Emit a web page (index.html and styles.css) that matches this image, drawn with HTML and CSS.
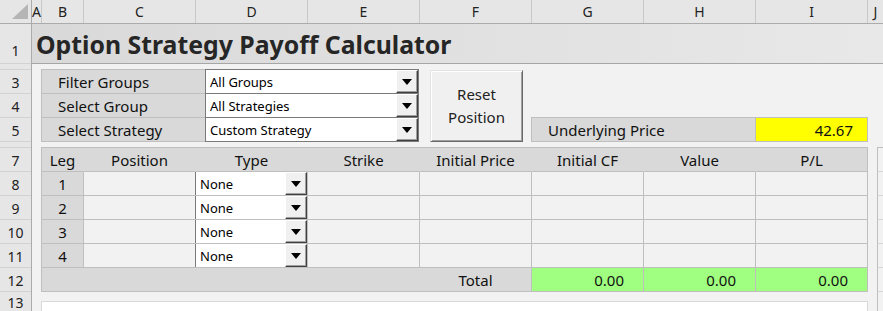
FILE: index.html
```html
<!DOCTYPE html>
<html>
<head>
<meta charset="utf-8">
<title>Option Strategy Payoff Calculator</title>
<link rel="stylesheet" href="styles.css">
</head>
<body>
<div class="app">
  <div class="corner"><svg class="tri" width="16" height="15" viewBox="0 0 16 15"><polygon points="16,0 16,15 0,15" fill="#b5b5b5"/></svg></div>
  <div class="colheads">
    <div class="ch ca">A</div>
    <div class="ch cb">B</div>
    <div class="ch cw">C</div>
    <div class="ch cw">D</div>
    <div class="ch cw">E</div>
    <div class="ch cw">F</div>
    <div class="ch cw">G</div>
    <div class="ch cw">H</div>
    <div class="ch cw">I</div>
    <div class="ch cj">J</div>
  </div>
  <div class="rowheads">
    <div class="rh r1">1</div>
    <div class="rh thin"></div>
    <div class="rh">3</div>
    <div class="rh">4</div>
    <div class="rh">5</div>
    <div class="rh thin"></div>
    <div class="rh">7</div>
    <div class="rh">8</div>
    <div class="rh">9</div>
    <div class="rh">10</div>
    <div class="rh">11</div>
    <div class="rh">12</div>
    <div class="rh r13">13</div>
  </div>
  <div class="content">
    <div class="title">Option Strategy Payoff Calculator</div>
    <div class="controls">
      <div class="filters">
        <div class="flabel first">Filter Groups</div>
        <div class="combo first"><span class="txt">All Groups</span><span class="drop"><span class="arrow"></span></span></div>
        <div class="flabel">Select Group</div>
        <div class="combo"><span class="txt">All Strategies</span><span class="drop"><span class="arrow"></span></span></div>
        <div class="flabel">Select Strategy</div>
        <div class="combo"><span class="txt">Custom Strategy</span><span class="drop"><span class="arrow"></span></span></div>
      </div>
      <button class="reset">Reset<br>Position</button>
      <div class="underlying">
        <div class="ulabel">Underlying Price</div>
        <div class="uval">42.67</div>
      </div>
    </div>
    <div class="lower">
      <div class="leftcol">
        <div class="legs">
          <div class="hd">Leg</div>
          <div class="hd">Position</div>
          <div class="hd">Type</div>
          <div class="hd">Strike</div>
          <div class="hd">Initial Price</div>
          <div class="hd">Initial CF</div>
          <div class="hd">Value</div>
          <div class="hd last">P/L</div>

          <div class="leg">1</div>
          <div class="blank"></div>
          <div class="type"><div class="tcombo"><span class="txt">None</span><span class="drop"><span class="arrow"></span></span></div></div>
          <div class="blank"></div><div class="blank"></div><div class="blank"></div><div class="blank"></div><div class="blank"></div>

          <div class="leg">2</div>
          <div class="blank"></div>
          <div class="type"><div class="tcombo"><span class="txt">None</span><span class="drop"><span class="arrow"></span></span></div></div>
          <div class="blank"></div><div class="blank"></div><div class="blank"></div><div class="blank"></div><div class="blank"></div>

          <div class="leg">3</div>
          <div class="blank"></div>
          <div class="type"><div class="tcombo"><span class="txt">None</span><span class="drop"><span class="arrow"></span></span></div></div>
          <div class="blank"></div><div class="blank"></div><div class="blank"></div><div class="blank"></div><div class="blank"></div>

          <div class="leg">4</div>
          <div class="blank"></div>
          <div class="type"><div class="tcombo"><span class="txt">None</span><span class="drop"><span class="arrow"></span></span></div></div>
          <div class="blank"></div><div class="blank"></div><div class="blank"></div><div class="blank"></div><div class="blank"></div>

          <div class="total"><span>Total</span></div>
          <div class="green">0.00</div>
          <div class="green">0.00</div>
          <div class="green">0.00</div>
        </div>
        <div class="row13"></div>
      </div>
      <div class="jstub"></div>
    </div>
  </div>
</div>
</body>
</html>
```
FILE: styles.css
```css
* { box-sizing: border-box; margin: 0; padding: 0; }
html, body { width: 883px; height: 311px; overflow: hidden; background: #f2f2f2; }
body { font-family: "Noto Sans", "Open Sans", sans-serif; font-size: 15px; color: #111; }

.app {
  display: grid;
  grid-template-columns: 32px 1fr;
  grid-template-rows: 24px 1fr;
  height: 311px;
}

.corner {
  background: #e6e6e6;
  border-right: 1px solid #ababab;
  border-bottom: 1px solid #ababab;
  display: flex;
  align-items: flex-end;
  justify-content: flex-end;
  padding: 0 3px 4px 0;
}

.colheads {
  display: flex;
  background: #e6e6e6;
  border-bottom: 1px solid #ababab;
}
.ch {
  flex: none;
  border-right: 1px solid #c8c8c8;
  text-align: center;
  font-size: 14px;
  line-height: 23px;
  color: #222;
}
.ca { width: 10px; }
.cb { width: 42px; }
.cw { width: 112px; }
.cj { flex: 1; border-right: none; }

.rowheads {
  display: flex;
  flex-direction: column;
  background: #e6e6e6;
  border-right: 1px solid #ababab;
}
.rh {
  flex: none;
  height: 24px;
  border-bottom: 1px solid #d2d2d2;
  display: flex;
  align-items: flex-end;
  justify-content: center;
  font-size: 14px;
  line-height: 20px;
  color: #222;
}
.rh.r1 { height: 40px; padding-bottom: 2px; }
.rh.thin { height: 6px; }
.rh.r13 { flex: 1; align-items: flex-start; padding-top: 1px; border-bottom: none; }

.content { display: flex; flex-direction: column; min-width: 0; }

.title {
  flex: none;
  height: 40px;
  border-bottom: 1px solid #a6a6a6;
  background: linear-gradient(to right, #d9d9d9, #e8e8e8);
  font-size: 24.8px;
  font-weight: 700;
  color: #262626;
  padding-left: 4px;
  display: flex;
  align-items: center;
}

.controls {
  flex: none;
  display: flex;
  margin-top: 5px;
  margin-left: 9px;
  height: 73px;
}
.filters {
  display: grid;
  grid-template-columns: 164px 214px;
  grid-template-rows: 25px 24px 24px;
}
.flabel {
  background: #d9d9d9;
  border-left: 1px solid #bfbfbf;
  border-bottom: 1px solid #bfbfbf;
  padding-left: 16px;
  display: flex;
  align-items: center;
}
.flabel.first { border-top: 1px solid #bfbfbf; }
.combo {
  background: #fff;
  border-left: 1px solid #7a7a7a;
  border-right: 1px solid #7a7a7a;
  border-bottom: 1px solid #7a7a7a;
  display: flex;
}
.combo.first { border-top: 1px solid #7a7a7a; }
.txt {
  flex: 1;
  padding-left: 4px;
  font-size: 13px;
  display: flex;
  align-items: center;
  color: #000;
}
.drop {
  flex: none;
  width: 22px;
  background: #f0f0f0;
  border-top: 1px solid #ffffff;
  border-left: 1px solid #ffffff;
  border-right: 1px solid #404040;
  border-bottom: 1px solid #404040;
  box-shadow: inset -1px -1px 0 #a0a0a0;
  display: flex;
  align-items: center;
  justify-content: center;
}
.arrow {
  width: 0;
  height: 0;
  border-left: 5.5px solid transparent;
  border-right: 5.5px solid transparent;
  border-top: 6px solid #000;
}

.reset {
  flex: none;
  margin-left: 11px;
  margin-top: 1px;
  width: 93px;
  height: 72px;
  background: #f0f0f0;
  border-top: 1px solid #e3e3e3;
  border-left: 1px solid #e3e3e3;
  border-right: 1px solid #696969;
  border-bottom: 1px solid #696969;
  box-shadow: inset 1px 1px 0 #ffffff, inset -1px -1px 0 #a0a0a0;
  font-family: "Noto Sans", "Open Sans", sans-serif;
  font-size: 15px;
  line-height: 23px;
  color: #222;
  text-align: center;
}

.underlying {
  flex: none;
  margin-left: 8px;
  align-self: flex-end;
  display: flex;
  height: 25px;
}
.ulabel {
  width: 225px;
  background: #d9d9d9;
  border: 1px solid #bfbfbf;
  padding-left: 16px;
  display: flex;
  align-items: center;
}
.uval {
  width: 112px;
  background: #ffff00;
  border-top: 1px solid #bfbfbf;
  border-right: 1px solid #bfbfbf;
  border-bottom: 1px solid #bfbfbf;
  padding-right: 14px;
  display: flex;
  align-items: center;
  justify-content: flex-end;
}

.lower {
  flex: 1;
  display: flex;
  margin-top: 5px;
  min-height: 0;
}
.leftcol {
  flex: none;
  width: 827px;
  margin-left: 9px;
  display: flex;
  flex-direction: column;
}
.legs {
  display: grid;
  grid-template-columns: 42px repeat(7, 112px);
  grid-auto-rows: 24px;
  border-left: 1px solid #bfbfbf;
  border-top: 1px solid #bfbfbf;
}
.legs > div {
  border-right: 1px solid #bfbfbf;
  border-bottom: 1px solid #bfbfbf;
  display: flex;
  align-items: center;
}
.legs > .hd {
  background: #d9d9d9;
  justify-content: center;
  border-right-color: #d9d9d9;
}
.legs > .hd.last { border-right-color: #bfbfbf; }
.legs > .leg { background: #d9d9d9; justify-content: center; }
.legs > .blank { background: #f2f2f2; }
.legs > .type { background: #fff; align-items: stretch; }
.tcombo {
  display: flex;
  width: 112px;
  margin-left: -1px;
  background: #fff;
  border-left: 1px solid #7a7a7a;
}
.legs > .total {
  grid-column: span 5;
  background: #d9d9d9;
  justify-content: flex-end;
}
.total span { width: 111px; text-align: center; }
.legs > .green {
  background: #a0ff80;
  justify-content: flex-end;
  padding-right: 19px;
}

.row13 {
  flex: 1;
  margin-top: 9px;
  background: #ffffff;
  border: 1px solid #d9d9d9;
  border-bottom: none;
}

.jstub {
  flex: 1;
  margin-left: 9px;
  border-left: 1px solid #bfbfbf;
  border-top: 1px solid #bfbfbf;
  background: repeating-linear-gradient(to bottom, #f2f2f2 0, #f2f2f2 23px, #d6d6d6 23px, #d6d6d6 24px);
}
```
